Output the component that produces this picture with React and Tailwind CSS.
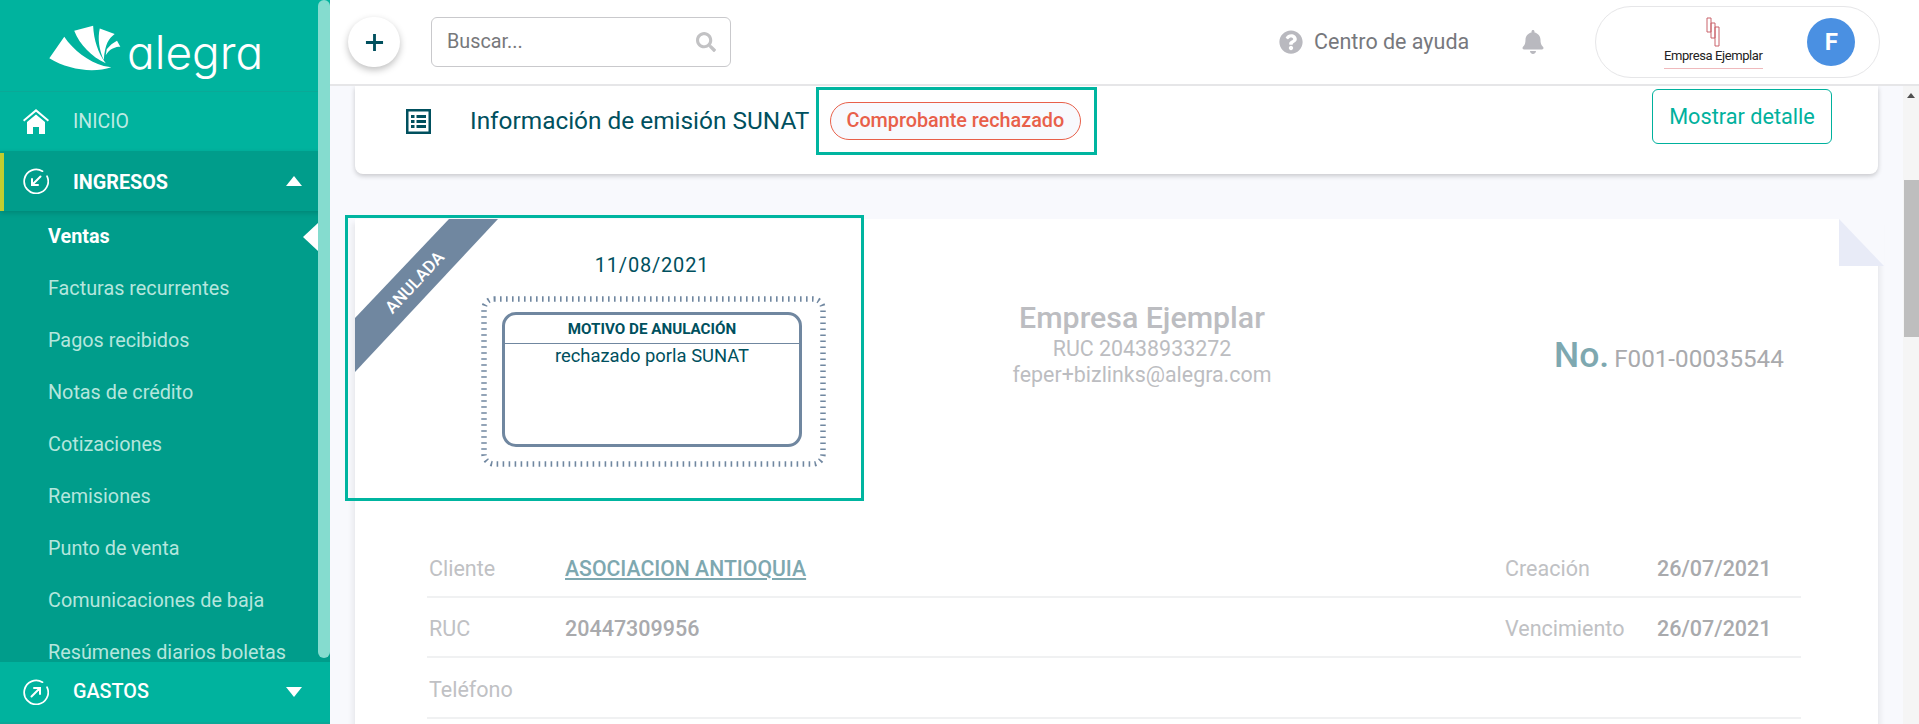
import React from 'react';
import { FaBell, FaQuestionCircle, FaSearch } from 'react-icons/fa';

const subItems = ['Facturas recurrentes', 'Pagos recibidos', 'Notas de crédito', 'Cotizaciones', 'Remisiones', 'Punto de venta', 'Comunicaciones de baja', 'Resúmenes diarios boletas'];

function FanLogo() {
  return (
    <svg viewBox="57 45 220 150" className="w-[73px] h-[50px] shrink-0" fill="#fff">
      <path d="M58 145 L103 80 C130 120 175 155 222 168 L245 172 C190 190 115 180 58 145Z" />
      <path d="M133 62 L190 47 C192 90 205 130 228 160 C185 140 150 105 133 62Z" />
      <path d="M210 55 L255 72 C238 85 226 100 222 150 C208 120 203 85 210 55Z" />
      <path d="M231 118 C240 106 250 98 262 92 L272 110 C258 110 240 115 228 136Z" />
    </svg>
  );
}

function CircleArrow({ dir }) {
  return (
    <svg viewBox="0 0 26 26" className="w-[26px] h-[26px]" fill="none" stroke="#fff" strokeWidth="1.7" strokeLinecap="round">
      <path d="M19.5 3.2A12 12 0 1 0 24 8.2" />
      {dir === 'in' ? (
        <path d="M17.5 8.5 L9 17 M9 11 V17 H15" strokeWidth="2" />
      ) : (
        <path d="M8.5 17.5 L17 9 M11 9 H17 V15" strokeWidth="2" />
      )}
    </svg>
  );
}

function HomeIcon() {
  return (
    <svg viewBox="0 0 26 25" className="w-[26px] h-[25px]" fill="#fff">
      <path d="M13 0 L26 11 L24.8 12.6 L13 2.8 L1.2 12.6 L0 11Z" />
      <path d="M13 5.5 L22 13 V25 H16 V18 H10 V25 H4 V13Z" />
    </svg>
  );
}

function Row({ label, value, link, label2, value2 }) {
  return (
    <div className="flex items-center h-[60.5px] pt-[5px] border-b-2 border-[#f0f1f2] text-[21.5px]">
      <span className="w-[138px] pl-[2px] text-[#c0c1c4]">{label}</span>
      <span className={link ? 'text-[21.2px] font-medium text-[#7ea8b0] underline underline-offset-2' : 'font-medium text-[#a9aaad]'}>{value}</span>
      {label2 && <span className="ml-auto w-[152px] text-[#c0c1c4]">{label2}</span>}
      {value2 && <span className="w-[144px] font-medium text-[#a9aaad]">{value2}</span>}
    </div>
  );
}

export default function App() {
  return (
    <div className="relative flex w-[1919px] h-[724px] overflow-hidden bg-[#f8f9fd] font-['Roboto',sans-serif]">
      <aside className="relative flex flex-col w-[330px] h-[724px] shrink-0 bg-[#00b39e] overflow-hidden">
        <div className="flex items-start h-[92px] pl-[49px] pt-[25px] border-b border-[#0aa997] shrink-0">
          <FanLogo />
          <span className="ml-[5px] -mt-[7px] text-[46px] leading-[68px] font-light text-white font-['Inter',sans-serif] [font-feature-settings:'cv11']">alegra</span>
        </div>
        <div className="flex-1 overflow-hidden">
          <div className="flex items-center h-[59px] pl-[23px] text-[19.5px] text-[#bdeae3]">
            <HomeIcon />
            <span className="ml-[24px]">INICIO</span>
          </div>
          <div className="relative flex items-center h-[60px] pl-[23px] pr-[28px] bg-[#009d8b] shadow-[0_2px_5px_rgba(0,0,0,0.15)] text-[19.8px] font-bold text-white">
            <div className="absolute left-0 top-[2px] bottom-0 w-[4px] bg-[#c1cd2f]" />
            <CircleArrow dir="in" />
            <span className="ml-[24px] mt-[3px]">INGRESOS</span>
            <div className="ml-auto w-0 h-0 border-l-[8px] border-r-[8px] border-b-[10px] border-l-transparent border-r-transparent border-b-white" />
          </div>
          <div className="bg-[#009d8b] pl-[48px] text-[19.8px] h-[451px]">
            <div className="relative flex items-center h-[52px] font-bold text-white">
              Ventas
              <div className="absolute right-[12px] top-[12px] w-0 h-0 border-t-[14px] border-b-[14px] border-r-[15px] border-t-transparent border-b-transparent border-r-white" />
            </div>
            {subItems.map((s) => (
              <div key={s} className="flex items-center h-[52px] text-[#b5e6dd] whitespace-nowrap">{s}</div>
            ))}
          </div>
        </div>
        <div className="flex items-center h-[62px] shrink-0 pl-[23px] pr-[28px] bg-[#00b39e] border-b-2 border-[#0aa997] text-[19.8px] font-medium text-white">
          <CircleArrow dir="out" />
          <span className="ml-[24px]">GASTOS</span>
          <div className="ml-auto w-0 h-0 border-l-[8px] border-r-[8px] border-t-[10px] border-l-transparent border-r-transparent border-t-white" />
        </div>
        <div className="absolute right-0 top-0 w-[12px] h-[658px] rounded-[6px] bg-[#85dccf]" />
      </aside>

      <div className="flex flex-col flex-1 min-w-0">
        <header className="relative z-10 flex items-center h-[86px] shrink-0 bg-white border-b-2 border-[#e6e6e8] pl-[18px]">
          <button className="flex items-center justify-center w-[52px] h-[50px] rounded-full bg-white shadow-[0_3px_7px_rgba(0,0,0,0.25)] text-[#00505e]">
            <svg viewBox="0 0 20 20" className="w-[19px] h-[19px]" stroke="currentColor" strokeWidth="3" fill="none"><path d="M10 1V19M1 10H19" /></svg>
          </button>
          <div className="flex items-center justify-between ml-[31px] w-[300px] h-[50px] border border-[#c9c9cc] rounded-[6px] pl-[15px] pr-[14px] text-[19.8px] text-[#77787b]">
            <span>Buscar...</span>
            <FaSearch className="text-[#c2c2c4] w-[20px] h-[20px]" />
          </div>
          <FaQuestionCircle className="ml-[548px] w-[24px] h-[24px] text-[#b9b9bf]" />
          <span className="ml-[11px] text-[21.5px] text-[#77787d]">Centro de ayuda</span>
          <FaBell className="ml-[53px] w-[22px] h-[24px] text-[#b9b9bf]" />
          <div className="flex items-center ml-[51px] w-[285px] h-[72px] rounded-[36px] border border-[#e6e6e8] bg-white">
            <div className="flex flex-col items-center ml-[67px] w-[100px]">
              <svg viewBox="0 0 14 32" className="w-[14px] h-[32px]" fill="none" stroke="#c9626a" strokeWidth="1"><path d="M1 2H5V16H1ZM5 7H9V22H5ZM9 11H13V30H9Z" /></svg>
              <span className="text-[13px] leading-[16px] text-[#222] whitespace-nowrap border-b border-[#efb9bc] pb-[4px] tracking-[-0.4px]">Empresa Ejemplar</span>
            </div>
            <div className="ml-[44px] flex items-center justify-center w-[48px] h-[48px] rounded-full bg-[#4a90e2] text-white text-[24px] font-bold">F</div>
          </div>
        </header>

        <div className="flex flex-1 min-h-0">
          <main className="flex-1 min-w-0 pl-[25px] pr-[25px]">
            <section className="flex items-start h-[88px] bg-white rounded-b-[8px] shadow-[0_2px_5px_rgba(0,0,0,0.2)]">
              <svg viewBox="0 0 25 25" className="ml-[51px] mt-[23px] w-[25px] h-[25px] shrink-0" fill="#00505e">
                <path fillRule="evenodd" d="M0 0H25V25H0ZM2.5 2.5V22.5H22.5V2.5ZM5 6H8.5V9H5ZM10.5 6H20V9H10.5ZM5 11H8.5V14H5ZM10.5 11H20V14H10.5ZM5 16H8.5V19H5ZM10.5 16H20V19H10.5Z" />
              </svg>
              <span className="ml-[39px] mt-[21px] text-[24.4px] leading-[28px] text-[#00505e] whitespace-nowrap">Información de emisión SUNAT</span>
              <div className="ml-[7px] mt-[1px] flex items-center justify-center w-[281px] h-[68px] pr-[3px] border-[3px] border-[#00b5a0]">
                <span className="flex items-center justify-center w-[251px] h-[38px] rounded-full border border-[#e8604a] bg-[#f8f9fd] text-[19.8px] font-medium text-[#e8604a] whitespace-nowrap">Comprobante rechazado</span>
              </div>
              <button className="ml-auto mr-[46px] mt-[3px] w-[180px] h-[55px] pt-[2px] rounded-[6px] border border-[#00b19d] bg-white text-[21.7px] text-[#00b19d]">Mostrar detalle</button>
            </section>

            <section className="relative mt-[45px] h-[520px] bg-white shadow-[-3px_4px_5px_rgba(0,0,0,0.06),3px_4px_5px_rgba(0,0,0,0.06)]">
              <div className="absolute right-[-6px] top-0 w-[45px] h-[47px] bg-[#f8f9fd]">
                <div className="w-full h-full bg-[#e8ebf7] [clip-path:polygon(0_0,100%_100%,0_100%)]" />
              </div>
              <div className="absolute left-0 top-0 w-[143px] h-[153px] bg-[#7087a0] [clip-path:polygon(94px_0,143px_0,0_153px,0_99px)]" />
              <div className="absolute left-[15px] top-[51px] w-[90px] text-center text-[17px] font-medium text-white -rotate-[47deg]">ANULADA</div>
              <div className="absolute left-[-10px] top-[-4px] w-[519px] h-[286px] border-[3px] border-[#00b5a0]" />

              <div className="flex items-start h-[318px]">
                <div className="ml-[126px] w-[345px] shrink-0">
                  <div className="pt-[34px] h-[77px] pr-[3px] text-center text-[20px] leading-[24px] tracking-[0.8px] text-[#00505e]">11/08/2021</div>
                  <div className="relative w-[345px] h-[171px] pl-[21px] pt-[16px]">
                    <svg className="absolute inset-0 w-[345px] h-[171px]" viewBox="0 0 345 171" fill="none">
                      <rect x="3" y="3" width="339" height="165" rx="10" stroke="#7087a0" strokeWidth="5.5" strokeDasharray="1.6 4.4" />
                    </svg>
                    <div className="relative flex flex-col w-[300px] h-[135px] rounded-[14px] border-[3px] border-[#7087a0]">
                      <div className="flex items-center justify-center h-[29px] border-b border-[#7087a0] text-[15.2px] font-bold text-[#00505e]">MOTIVO DE ANULACIÓN</div>
                      <div className="text-center text-[18.4px] leading-[24px] text-[#00505e]">rechazado porla SUNAT</div>
                    </div>
                  </div>
                </div>
                <div className="ml-[166px] w-[300px] shrink-0 pt-[79px] text-center text-[#bcbdc1]">
                  <div className="text-[30.3px] leading-[40px] font-medium">Empresa Ejemplar</div>
                  <div className="text-[21.4px] leading-[26px] -mt-[2px]">RUC 20438933272</div>
                  <div className="text-[21.4px] leading-[26px]">feper+bizlinks@alegra.com</div>
                </div>
                <div className="ml-[262px] pt-[113px] flex items-baseline whitespace-nowrap">
                  <span className="text-[35.5px] leading-[46px] font-medium text-[#7ea8b0]">No.</span>
                  <span className="ml-[5px] text-[24.2px] text-[#a9aaad]">F001-00035544</span>
                </div>
              </div>

              <div className="ml-[72px] mr-[77px]">
                <Row label="Cliente" value="ASOCIACION ANTIOQUIA" link label2="Creación" value2="26/07/2021" />
                <Row label="RUC" value="20447309956" label2="Vencimiento" value2="26/07/2021" />
                <Row label="Teléfono" />
              </div>
            </section>
          </main>
          <div className="relative w-[16px] shrink-0 bg-[#f5f5f5]">
            <div className="flex justify-center pt-[7px]">
              <div className="w-0 h-0 border-l-[4px] border-r-[4px] border-b-[5px] border-l-transparent border-r-transparent border-b-[#505050]" />
            </div>
            <div className="mt-[82px] ml-[1px] w-[15px] h-[157px] bg-[#bebebe]" />
          </div>
        </div>
      </div>
    </div>
  );
}
